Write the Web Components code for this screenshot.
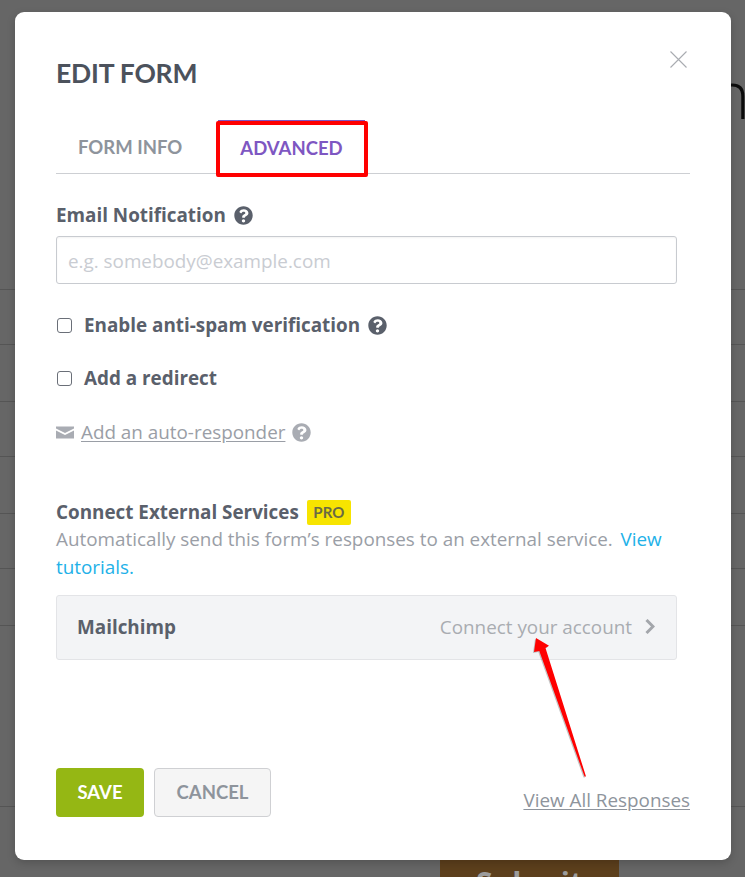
<!DOCTYPE html>
<html>
<head>
<meta charset="utf-8">
<title>Edit form</title>
<style>
    html, body { margin: 0; padding: 0; height: 877px; overflow: hidden; background: #666; }
    body { position: relative; font-family: "Open Sans", sans-serif; }
</style>
</head>
<body>
<page-backdrop></page-backdrop>
<edit-modal>
    <modal-tabs slot="tabs"></modal-tabs>

    <field-label slot="body" help="dark" style="margin-top:28px">Email Notification</field-label>
    <text-box slot="body" placeholder="e.g. somebody@example.com"></text-box>

    <check-row slot="body" help="dark" style="margin-top:29px">Enable anti-spam verification</check-row>
    <check-row slot="body" style="margin-top:29px">Add a redirect</check-row>
    <responder-link slot="body"></responder-link>

    <services-block slot="body">
        <service-row name="Mailchimp" action="Connect your account"></service-row>
    </services-block>

    <app-button slot="footer" kind="save">SAVE</app-button>
    <app-button slot="footer" kind="cancel">CANCEL</app-button>
</edit-modal>
<red-arrow></red-arrow>

<script>
const HELP_PATH = 'M504 256c0 137-111 248-248 248S8 393 8 256 119 8 256 8s248 111 248 248zM263 90c-54 0-89 23-116 64-4 5-3 12 3 16l35 26c5 4 13 3 17-2 18-23 30-36 58-36 21 0 46 13 46 33 0 15-12 23-33 34-23 14-54 31-54 75v6c0 7 5 12 12 12h56c7 0 12-5 12-12v-2c0-31 90-32 90-114 0-62-65-100-126-100zm-7 264c-25 0-45 20-45 45s20 45 45 45 45-20 45-45-20-45-45-45z';

class PageBackdrop extends HTMLElement {
    constructor(){
        super();
        this.attachShadow({mode: 'open'});
        // row heights are the lines that peek out beside the modal
        const rows = [290, 55, 57, 55, 57, 55, 57, 181];
        this.shadowRoot.innerHTML = `
        <style>
            :host { display: block; width: 745px; height: 877px; overflow: hidden; position: relative; }
            .row { box-sizing: border-box; border-bottom: 1px solid #555; }
            .glyph { position: absolute; left: 711px; top: 60px; font: 300 66px/66px "Open Sans", sans-serif; color: #0b0b0b; }
            .submit {
                position: absolute; left: 440px; top: 860px; width: 179px; height: 40px;
                background: #5c3f1c; text-align: center;
                font: 700 30px/40px "Open Sans", sans-serif; color: #9c9c9c; padding-top: 3px;
            }
        </style>
        ${rows.map(h => `<div class="row" style="height:${h}px"></div>`).join('')}
        <div class="glyph">n</div>
        <div class="submit">Submit</div>`;
    }
}

class EditModal extends HTMLElement {
    constructor(){
        super();
        this.attachShadow({mode: 'open'});
        this.shadowRoot.innerHTML = `
        <style>
            :host {
                position: absolute; left: 15px; top: 12px; width: 716px; height: 848px;
                box-sizing: border-box; padding: 0 41px; display: flex; flex-direction: column;
                background: #fff; border-radius: 9px; box-shadow: 0 3px 8px rgba(0,0,0,.18);
            }
            h1 {
                margin: 44px 0 0; font: 700 26.500px/34px Lato, sans-serif; color: #4c525c; letter-spacing: -.2px;
            }
            .close { position: absolute; right: 44px; top: 39px; width: 17px; height: 17px; display: block; }
            .main { display: flex; flex-direction: column; }
            .footer { margin-top: auto; margin-bottom: 43px; display: flex; gap: 10px; align-items: flex-end; }
            .all { margin-left: auto; font-size: 18.850px; line-height: 26px; color: #8e949c; text-decoration: underline; text-underline-offset: 2px; margin-bottom: 4px; }
        </style>
        <h1>EDIT FORM</h1>
        <svg class="close" viewBox="0 0 17 17"><path d="M.5.5l16 16M16.500.5l-16 16" stroke="#a9acb1" stroke-width="1.100" fill="none"/></svg>
        <slot name="tabs"></slot>
        <div class="main"><slot name="body"></slot></div>
        <div class="footer"><slot name="footer"></slot><a class="all">View All Responses</a></div>`;
    }
}

class ModalTabs extends HTMLElement {
    constructor(){
        super();
        this.attachShadow({mode: 'open'});
        this.shadowRoot.innerHTML = `
        <style>
            :host { display: flex; height: 53px; margin-top: 30px; border-bottom: 1px solid #cdcfd3; font: 700 18.500px Lato, sans-serif; }
            .tab { display: flex; align-items: center; height: 53px; color: #8e949c; box-sizing: border-box; }
            .info { width: 160px; padding-left: 22px; margin-right: 2px; }
            .adv { width: 147px; justify-content: center; color: #7e57c2; border-top: 2px solid #7e57c2; position: relative; }
            .mark { position: absolute; left: -2px; top: -1px; width: 144px; height: 48px; border: 4px solid #f00; border-radius: 2px; box-sizing: content-box; }
        </style>
        <div class="tab info">FORM INFO</div>
        <div class="tab adv">ADVANCED<div class="mark"></div></div>`;
    }
}

class HelpIcon extends HTMLElement {
    constructor(){
        super();
        this.attachShadow({mode: 'open'});
        this.shadowRoot.innerHTML = `
        <style>
            :host { display: inline-block; width: 19px; height: 19px; color: var(--help-color, #5a606b); }
            svg { display: block; width: 100%; height: 100%; fill: currentColor; }
        </style>
        <svg viewBox="0 0 512 512"><path fill-rule="evenodd" d="${HELP_PATH}"/></svg>`;
    }
}

class FieldLabel extends HTMLElement {
    constructor(){
        super();
        this.attachShadow({mode: 'open'});
        this.shadowRoot.innerHTML = `
        <style>
            :host { display: flex; align-items: center; gap: 8px; font: 700 18.850px/26px "Open Sans", sans-serif; color: #5a606b; }
        </style>
        <span><slot></slot></span><help-icon></help-icon>`;
    }
}

class TextBox extends HTMLElement {
    constructor(){
        super();
        this.attachShadow({mode: 'open'});
        this.shadowRoot.innerHTML = `
        <style>
            :host { display: block; width: 621px; margin-top: 8px; }
            input {
                display: block; width: 100%; height: 48px; box-sizing: border-box; padding: 1px 11px 0;
                border: 1px solid #c8cbd0; border-radius: 3px; outline: none;
                box-shadow: inset 0 1px 2px rgba(0,0,0,.05);
                font: 400 18.850px "Open Sans", sans-serif; color: #5a606b;
            }
            input::placeholder { color: #c9ccd2; opacity: 1; }
        </style>
        <input type="text" placeholder="${this.getAttribute('placeholder')}">`;
    }
}

class CheckRow extends HTMLElement {
    constructor(){
        super();
        this.attachShadow({mode: 'open'});
        const help = this.hasAttribute('help') ? '<help-icon></help-icon>' : '';
        this.shadowRoot.innerHTML = `
        <style>
            :host { display: flex; align-items: center; font: 700 18.850px/24px "Open Sans", sans-serif; color: #5a606b; }
            .box { width: 15px; height: 15px; margin: 1px 12px 0 1px; box-sizing: border-box; border: 1.500px solid #6a6f78; border-radius: 3px; background: #fff; flex: none; }
            help-icon { margin-left: 8px; }
        </style>
        <div class="box"></div><span><slot></slot></span>${help}`;
    }
}

class ResponderLink extends HTMLElement {
    constructor(){
        super();
        this.attachShadow({mode: 'open'});
        this.shadowRoot.innerHTML = `
        <style>
            :host { display: flex; align-items: center; margin-top: 30px; font: 400 18.850px/24px "Open Sans", sans-serif; color: #9a9ea6; --help-color: #a9acb3; }
            svg { width: 18px; height: 13px; margin: 0 7px 0 0; flex: none; fill: #a9acb3; }
            a { text-decoration: underline; text-underline-offset: 2px; }
            help-icon { margin-left: 7px; }
        </style>
        <svg viewBox="0 0 18 13"><path d="M0 .5h18v2L9 7 0 2.500z"/><path d="M0 4.500l9 4.500 9-4.500V12.500H0z"/></svg>
        <a>Add an auto-responder</a><help-icon></help-icon>`;
    }
}

class ServicesBlock extends HTMLElement {
    constructor(){
        super();
        this.attachShadow({mode: 'open'});
        this.shadowRoot.innerHTML = `
        <style>
            :host { display: block; margin-top: 55px; }
            .head { display: flex; align-items: center; gap: 8px; font: 700 18.850px/26px "Open Sans", sans-serif; color: #5a606b; }
            .pro { background: #f7e400; border-radius: 2px; width: 44px; text-align: center; height: 25px; font: 700 15px/25px Lato, sans-serif; color: #6a6a45; }
            p { margin: 0; width: 621px; font: 400 18.850px/28px "Open Sans", sans-serif; color: #9a9ea6; }
            a { color: #22b1e8; }
            .first { margin-left: -2px; }
            ::slotted(service-row) { margin-top: 14px; }
        </style>
        <div class="head"><span>Connect External Services</span><span class="pro">PRO</span></div>
        <p>Automatically send this form’s responses to an external service. &nbsp;<a class="first">View</a> <a>tutorials.</a></p>
        <slot></slot>`;
    }
}

class ServiceRow extends HTMLElement {
    constructor(){
        super();
        this.attachShadow({mode: 'open'});
        this.shadowRoot.innerHTML = `
        <style>
            :host {
                display: flex; align-items: center; width: 621px; height: 65px; box-sizing: border-box;
                padding: 0 21px 2px 20px; background: #f3f4f6; border: 1px solid #e3e4e7; border-radius: 3px;
            }
            .name { font: 700 18.850px "Open Sans", sans-serif; color: #5a606b; }
            .act { margin-left: auto; font: 400 18.850px "Open Sans", sans-serif; color: #a9acb1; }
            svg { width: 10px; height: 15px; margin-left: 13px; fill: none; stroke: #a3a6ab; stroke-width: 3; }
        </style>
        <span class="name">${this.getAttribute('name')}</span>
        <span class="act">${this.getAttribute('action')}</span>
        <svg viewBox="0 0 10 15"><path d="M1.500 1l6.500 6.500-6.500 6.500"/></svg>`;
    }
}

class AppButton extends HTMLElement {
    constructor(){
        super();
        this.attachShadow({mode: 'open'});
        const save = this.getAttribute('kind') === 'save';
        this.shadowRoot.innerHTML = `
        <style>
            :host {
                display: flex; align-items: center; justify-content: center; height: 49px; box-sizing: border-box;
                border-radius: 4px; font: 700 18.500px Lato, sans-serif; padding-bottom: 2px;
                width: ${save ? 88 : 117}px;
                background: ${save ? '#95b714' : '#f5f5f5'};
                color: ${save ? '#fff' : '#8e949c'};
                border: ${save ? '0' : '1px solid #cfd0d3'};
            }
        </style>
        <slot></slot>`;
    }
}

class RedArrow extends HTMLElement {
    constructor(){
        super();
        this.attachShadow({mode: 'open'});
        this.shadowRoot.innerHTML = `
        <style>
            :host { position: absolute; left: 525px; top: 630px; width: 70px; height: 155px; }
            svg { display: block; width: 100%; height: 100%; overflow: visible; }
        </style>
        <svg viewBox="525 630 70 155">
            <path d="M536 638L549 645.700L545.500 648L586 776.500L584.500 776.500L539.300 651L534 652Z" fill="#555" opacity=".35" transform="translate(-1 1)"/>
            <path d="M536 638L549 645.700L545.500 648L586 776.500L584.500 776.500L539.300 651L534 652Z" fill="#f00"/>
        </svg>`;
    }
}

customElements.define('help-icon', HelpIcon);
customElements.define('page-backdrop', PageBackdrop);
customElements.define('edit-modal', EditModal);
customElements.define('modal-tabs', ModalTabs);
customElements.define('field-label', FieldLabel);
customElements.define('text-box', TextBox);
customElements.define('check-row', CheckRow);
customElements.define('responder-link', ResponderLink);
customElements.define('services-block', ServicesBlock);
customElements.define('service-row', ServiceRow);
customElements.define('app-button', AppButton);
customElements.define('red-arrow', RedArrow);
</script>
</body>
</html>
